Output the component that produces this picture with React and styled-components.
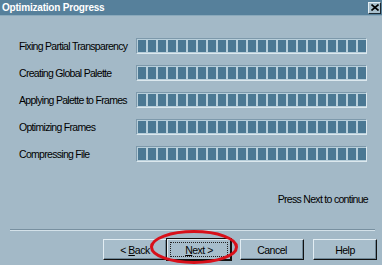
import React from "react";
import styled, { createGlobalStyle } from "styled-components";

const Global = createGlobalStyle`
  html, body { margin: 0; padding: 0; background: #a3b9c7; }
  body { font-family: "Liberation Sans", Arial, sans-serif; }
`;

const Window = styled.div`
  position: relative;
  width: 382px;
  height: 265px;
  background: #a3b9c7;
  display: flex;
  flex-direction: column;
  overflow: hidden;
  color: #000;
`;

const TitleBar = styled.div`
  height: 15px;
  background: #56809b;
  display: flex;
  align-items: center;
  justify-content: space-between;
  padding: 0 1px 0 2px;
  border-bottom: 1px solid #8aa9bb;
`;

const Title = styled.span`
  color: #fff;
  font-weight: bold;
  font-size: 10px;
  letter-spacing: -0.2px;
  white-space: nowrap;
`;

const CloseBtn = styled.div`
  width: 13px;
  height: 12px;
  background: #a9c0cd;
  border-top: 1px solid #e4eef3;
  border-left: 1px solid #e4eef3;
  border-right: 1px solid #1c2a33;
  border-bottom: 1px solid #1c2a33;
  box-sizing: border-box;
  display: flex;
  align-items: center;
  justify-content: center;
`;

const Body = styled.div`
  display: flex;
  flex-direction: column;
  padding: 22px 0 0 19px;
  gap: 11px;
`;

const Row = styled.div`
  display: flex;
  align-items: center;
  height: 16px;
`;

const Label = styled.div`
  width: 117px;
  font-size: 10.5px;
  letter-spacing: -0.7px;
  white-space: nowrap;
`;

const Bar = styled.div`
  width: 231px;
  height: 16px;
  box-sizing: border-box;
  border-top: 1px solid #7d99ab;
  border-left: 1px solid #7d99ab;
  border-right: 1px solid #dce8ee;
  border-bottom: 1px solid #dce8ee;
  background: #b7ceda;
  padding: 1px;
  display: flex;
  gap: 2px;
  overflow: hidden;
`;

const Cell = styled.div`
  flex: 0 0 8px;
  height: 100%;
  background: #4b7893;
`;

const Hint = styled.div`
  margin-top: 31px;
  padding-right: 14px;
  text-align: right;
  font-size: 10.5px;
  letter-spacing: -0.7px;
  white-space: nowrap;
`;

const Separator = styled.div`
  margin: 24px 7px 0 10px;
  height: 0;
  border-top: 1px solid #7890a0;
  border-bottom: 1px solid #d3e1e9;
`;

const Buttons = styled.div`
  display: flex;
  margin-top: 8px;
  padding-left: 103px;
`;

const Button = styled.div`
  width: 64px;
  height: 21px;
  box-sizing: border-box;
  margin-right: ${(p) => p.$gap || 0}px;
  background: #a7bdcb;
  border-top: 1px solid #e2edf3;
  border-left: 1px solid #e2edf3;
  border-right: 1px solid #111;
  border-bottom: 1px solid #111;
  box-shadow: ${(p) => (p.$default ? "0 0 0 1px #111" : "inset -1px -1px 0 #6e8797")};
  font-size: 10.5px;
  letter-spacing: -0.5px;
  display: flex;
  align-items: center;
  justify-content: center;
  padding: 2px;
  white-space: pre;
`;

const Focus = styled.div`
  flex: 1;
  align-self: stretch;
  border: 1px dotted #222;
  display: flex;
  align-items: center;
  justify-content: center;
`;

const Ellipse = styled.svg`
  position: absolute;
  left: 149px;
  top: 229px;
`;

const items = [
  "Fixing Partial Transparency",
  "Creating Global Palette",
  "Applying Palette to Frames",
  "Optimizing Frames",
  "Compressing File",
];

export default function App() {
  const cells = Array.from({ length: 23 });
  return (
    <Window>
      <Global />
      <TitleBar>
        <Title>Optimization Progress</Title>
        <CloseBtn>
          <svg width="8" height="7" viewBox="0 0 8 7">
            <path d="M0.5 0.5 L7.5 6.5 M7.5 0.5 L0.5 6.5" stroke="#000" strokeWidth="1.6" />
          </svg>
        </CloseBtn>
      </TitleBar>
      <Body>
        {items.map((t) => (
          <Row key={t}>
            <Label>{t}</Label>
            <Bar>
              {cells.map((_, i) => (
                <Cell key={i} />
              ))}
            </Bar>
          </Row>
        ))}
      </Body>
      <Hint>Press Next to continue</Hint>
      <Separator />
      <Buttons>
        <Button>
          <span>
            {"< "}
            <u>B</u>ack
          </span>
        </Button>
        <Button $default $gap={9}>
          <Focus>
            <span>
              <u>N</u>
              {"ext >"}
            </span>
          </Focus>
        </Button>
        <Button $gap={9}>Cancel</Button>
        <Button>Help</Button>
      </Buttons>
      <Ellipse width="90" height="36" viewBox="0 0 90 36">
        <ellipse cx="45" cy="18" rx="42.5" ry="15.5" fill="none" stroke="#d8101a" strokeWidth="3" />
      </Ellipse>
    </Window>
  );
}
